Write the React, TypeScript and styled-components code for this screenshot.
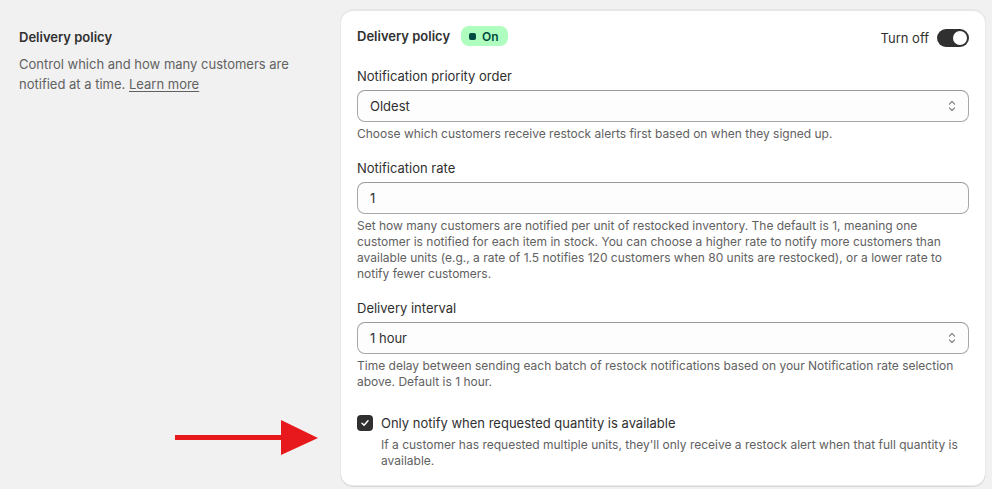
import React from 'react';
import styled, { createGlobalStyle } from 'styled-components';

const GlobalStyle = createGlobalStyle`
    html, body {
        margin: 0;
        padding: 0;
        background: #f1f1f1;
        font-family: Inter, "Noto Sans", sans-serif;
        color: #303030;
    }
`;

const Page = styled.div`
    position: relative;
    display: grid;
    grid-template-columns: 322px 644px;
    padding: 10px 6px 3px 19px;
    width: 992px;
    box-sizing: border-box;
`;

const Aside = styled.div`
    padding-top: 17px;
    display: flex;
    flex-direction: column;
    gap: 7px;
`;

const Title = styled.h2`
    margin: 0;
    font-size: 13px;
    line-height: 20px;
    font-weight: 600;
    color: #303030;
`;

const AsideText = styled.p`
    margin: 0;
    font-size: 13px;
    line-height: 20px;
    color: #616161;
    width: 290px;
`;

const Link = styled.a`
    color: #616161;
    text-decoration: underline;
    text-underline-offset: 2px;
`;

const Card = styled.div`
    background: #fff;
    border-radius: 12px;
    box-shadow: 0 1px 0 0 rgba(26, 26, 26, 0.07), 0 1px 0 0 rgba(204, 204, 204, 0.5) inset, 0 -1px 0 0 rgba(0, 0, 0, 0.08) inset, 0 0 0 1px rgba(0,0,0,0.04);
    padding: 16px 16px 17px;
    display: flex;
    flex-direction: column;
`;

const Header = styled.div`
    display: flex;
    align-items: center;
    justify-content: space-between;
    height: 20px;
    margin-bottom: 20px;
`;

const HeaderLeft = styled.div`
    display: flex;
    align-items: center;
    gap: 11px;
`;

const Badge = styled.span`
    display: inline-flex;
    align-items: center;
    gap: 6px;
    height: 20px;
    padding: 0 9px 0 8px;
    border-radius: 8px;
    background: #affebf;
    color: #014b40;
    font-size: 12px;
    font-weight: 600;
`;

const Dot = styled.span`
    width: 7px;
    height: 7px;
    border-radius: 2px;
    background: #014b40;
`;

const ToggleWrap = styled.label`
    display: flex;
    align-items: center;
    gap: 8px;
    font-size: 13px;
    color: #303030;
    margin-top: 4px;
`;

const Track = styled.span`
    display: inline-flex;
    align-items: center;
    justify-content: flex-end;
    width: 32px;
    height: 18px;
    border-radius: 9px;
    background: #303030;
    padding: 2px;
    box-sizing: border-box;
`;

const Knob = styled.span`
    width: 14px;
    height: 14px;
    border-radius: 50%;
    background: #fff;
`;

const Field = styled.div<{ $gap?: number }>`
    display: flex;
    flex-direction: column;
    margin-bottom: ${p => p.$gap ?? 16}px;
`;

const Label = styled.label`
    font-size: 13px;
    line-height: 20px;
    color: #303030;
    margin-bottom: 4px;
`;

const Control = styled.div`
    display: flex;
    align-items: center;
    justify-content: space-between;
    height: 32px;
    box-sizing: border-box;
    border: 1px solid #a8a8a8;
    border-top-color: #9a9a9a;
    border-radius: 8px;
    background: #fdfdfd;
    padding: 0 10px 0 12px;
    font-size: 13px;
    color: #303030;
`;

const Help = styled.p<{ $indent?: number }>`
    margin: 4px 0 0;
    padding-left: ${p => p.$indent ?? 0}px;
    font-size: 12px;
    line-height: 16px;
    color: #616161;
`;

const CheckRow = styled.div`
    display: flex;
    align-items: center;
    gap: 8px;
    font-size: 13px;
    line-height: 20px;
    color: #303030;
`;

const Box = styled.span`
    display: inline-flex;
    align-items: center;
    justify-content: center;
    width: 16px;
    height: 16px;
    border-radius: 4px;
    background: #303030;
`;

const Arrow = styled.svg`
    position: absolute;
    left: 175px;
    top: 419px;
`;

const Chevrons = () => (
    <svg width="12" height="16" viewBox="0 0 12 16" fill="none">
        <path d="M3.5 6 L6 3.5 L8.5 6" stroke="#8a8a8a" strokeWidth="1.2" strokeLinecap="round" strokeLinejoin="round" />
        <path d="M3.5 10 L6 12.5 L8.5 10" stroke="#8a8a8a" strokeWidth="1.2" strokeLinecap="round" strokeLinejoin="round" />
    </svg>
);

const App: React.FC = () => {
    return (
        <React.Fragment>
            <GlobalStyle />
            <Page>
                <Aside>
                    <Title>Delivery policy</Title>
                    <AsideText>
                        Control which and how many customers are notified at a time. <Link>Learn more</Link>
                    </AsideText>
                </Aside>
                <Card>
                    <Header>
                        <HeaderLeft>
                            <Title>Delivery policy</Title>
                            <Badge><Dot />On</Badge>
                        </HeaderLeft>
                        <ToggleWrap>
                            Turn off
                            <Track><Knob /></Track>
                        </ToggleWrap>
                    </Header>
                    <Field>
                        <Label>Notification priority order</Label>
                        <Control>Oldest<Chevrons /></Control>
                        <Help>Choose which customers receive restock alerts first based on when they signed up.</Help>
                    </Field>
                    <Field>
                        <Label>Notification rate</Label>
                        <Control>1</Control>
                        <Help>
                            Set how many customers are notified per unit of restocked inventory. The default is 1, meaning one customer is notified for each item in stock. You can choose a higher rate to notify more customers than available units (e.g., a rate of 1.5 notifies 120 customers when 80 units are restocked), or a lower rate to notify fewer customers.
                        </Help>
                    </Field>
                    <Field $gap={23}>
                        <Label>Delivery interval</Label>
                        <Control>1 hour<Chevrons /></Control>
                        <Help>Time delay between sending each batch of restock notifications based on your Notification rate selection above. Default is 1 hour.</Help>
                    </Field>
                    <Field $gap={0}>
                        <CheckRow>
                            <Box>
                                <svg width="10" height="10" viewBox="0 0 10 10" fill="none">
                                    <path d="M2 5.2 L4.1 7.2 L8 2.8" stroke="#fff" strokeWidth="1.5" strokeLinecap="round" strokeLinejoin="round" />
                                </svg>
                            </Box>
                            Only notify when requested quantity is available
                        </CheckRow>
                        <Help $indent={24}>If a customer has requested multiple units, they'll only receive a restock alert when that full quantity is available.</Help>
                    </Field>
                </Card>
                <Arrow width="144" height="38" viewBox="0 0 144 38">
                    <rect x="0" y="16" width="110" height="5" fill="#e8191c" />
                    <polygon points="106,1 143,19 106,36" fill="#e8191c" />
                </Arrow>
            </Page>
        </React.Fragment>
    );
};

export default App;
